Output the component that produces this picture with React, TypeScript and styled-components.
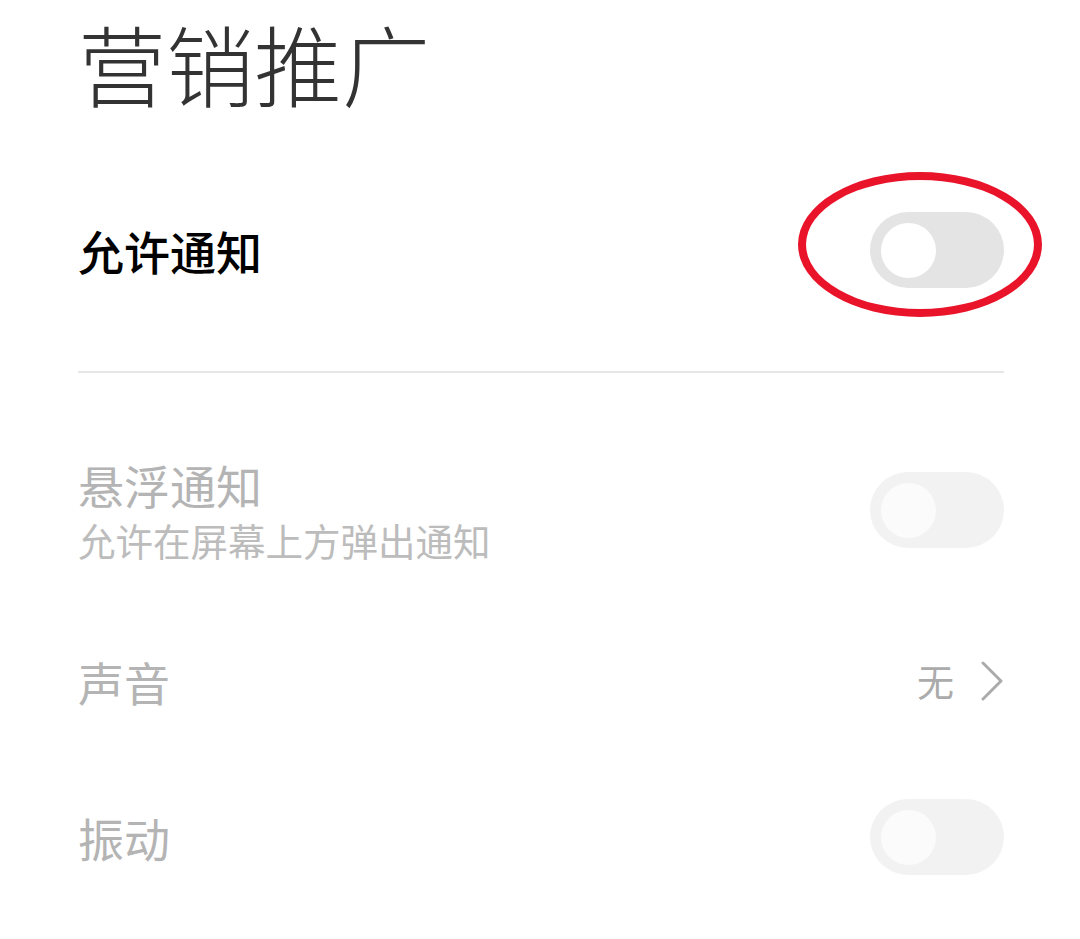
import React from "react";
import styled, { createGlobalStyle } from "styled-components";

const GlobalStyle = createGlobalStyle`
  html, body {
    margin: 0;
    padding: 0;
    background: #ffffff;
  }
  body {
    font-family: "Noto Sans CJK SC", "Noto Sans", sans-serif;
  }
`;

const Page = styled.div`
  display: flex;
  flex-direction: column;
  padding: 0 76px 0 78px;
  background: #ffffff;
  min-height: 939px;
  box-sizing: border-box;
`;

const Title = styled.h1`
  margin: 0;
  font-size: 88px;
  line-height: 124px;
  font-weight: 300;
  color: #333333;
  letter-spacing: 0;
`;

const Row = styled.div<{ $h: number; $pt?: number }>`
  display: flex;
  align-items: center;
  justify-content: space-between;
  box-sizing: border-box;
  height: ${(p) => p.$h}px;
  padding-top: ${(p) => p.$pt ?? 0}px;
`;

const TextBlock = styled.div`
  display: flex;
  flex-direction: column;
`;

const Label = styled.div<{ $disabled?: boolean }>`
  font-size: 46px;
  line-height: 56px;
  font-weight: ${(p) => (p.$disabled ? 400 : 500)};
  color: ${(p) => (p.$disabled ? "#b4b4b4" : "#000000")};
`;

const Sub = styled.div`
  margin-top: 4px;
  font-size: 37.5px;
  line-height: 48px;
  color: #bcbcbc;
`;

const Divider = styled.div`
  height: 2px;
  background: #e6e6e6;
`;

const SwitchWrap = styled.div`
  position: relative;
  display: flex;
`;

const Track = styled.div<{ $disabled?: boolean }>`
  width: 134px;
  height: 76px;
  border-radius: 38px;
  background: ${(p) => (p.$disabled ? "#f2f2f2" : "#e4e4e4")};
  display: flex;
  align-items: center;
  padding-left: 11px;
  box-sizing: border-box;
`;

const Knob = styled.div<{ $disabled?: boolean }>`
  width: 55px;
  height: 55px;
  border-radius: 50%;
  background: ${(p) => (p.$disabled ? "#fbfbfb" : "#ffffff")};
`;

const Highlight = styled.div`
  position: absolute;
  left: -72px;
  top: -40px;
  width: 244px;
  height: 145px;
  border: 8px solid #e9142a;
  border-radius: 50%;
  box-sizing: border-box;
  pointer-events: none;
`;

const Value = styled.div`
  display: flex;
  align-items: center;
  gap: 26px;
  font-size: 37px;
  line-height: 48px;
  color: #ababab;
`;

const Toggle = ({ disabled, marked }: { disabled?: boolean; marked?: boolean }) => (
  <SwitchWrap>
    <Track $disabled={disabled}>
      <Knob $disabled={disabled} />
    </Track>
    {marked && <Highlight />}
  </SwitchWrap>
);

const Chevron = () => (
  <svg width="24" height="40" viewBox="0 0 24 40" fill="none">
    <polyline
      points="3,2 21,20 3,38"
      stroke="#ababab"
      strokeWidth="3"
      strokeLinecap="round"
      strokeLinejoin="round"
    />
  </svg>
);

export default function App() {
  return (
    <>
      <GlobalStyle />
      <Page>
        <Title>营销推广</Title>
        <Row $h={247} $pt={5}>
          <Label>允许通知</Label>
          <Toggle marked />
        </Row>
        <Divider />
        <Row $h={274}>
          <TextBlock>
            <Label $disabled>悬浮通知</Label>
            <Sub>允许在屏幕上方弹出通知</Sub>
          </TextBlock>
          <Toggle disabled />
        </Row>
        <Row $h={68}>
          <Label $disabled>声音</Label>
          <Value>
            <span>无</span>
            <Chevron />
          </Value>
        </Row>
        <Row $h={244}>
          <Label $disabled>振动</Label>
          <Toggle disabled />
        </Row>
      </Page>
    </>
  );
}
